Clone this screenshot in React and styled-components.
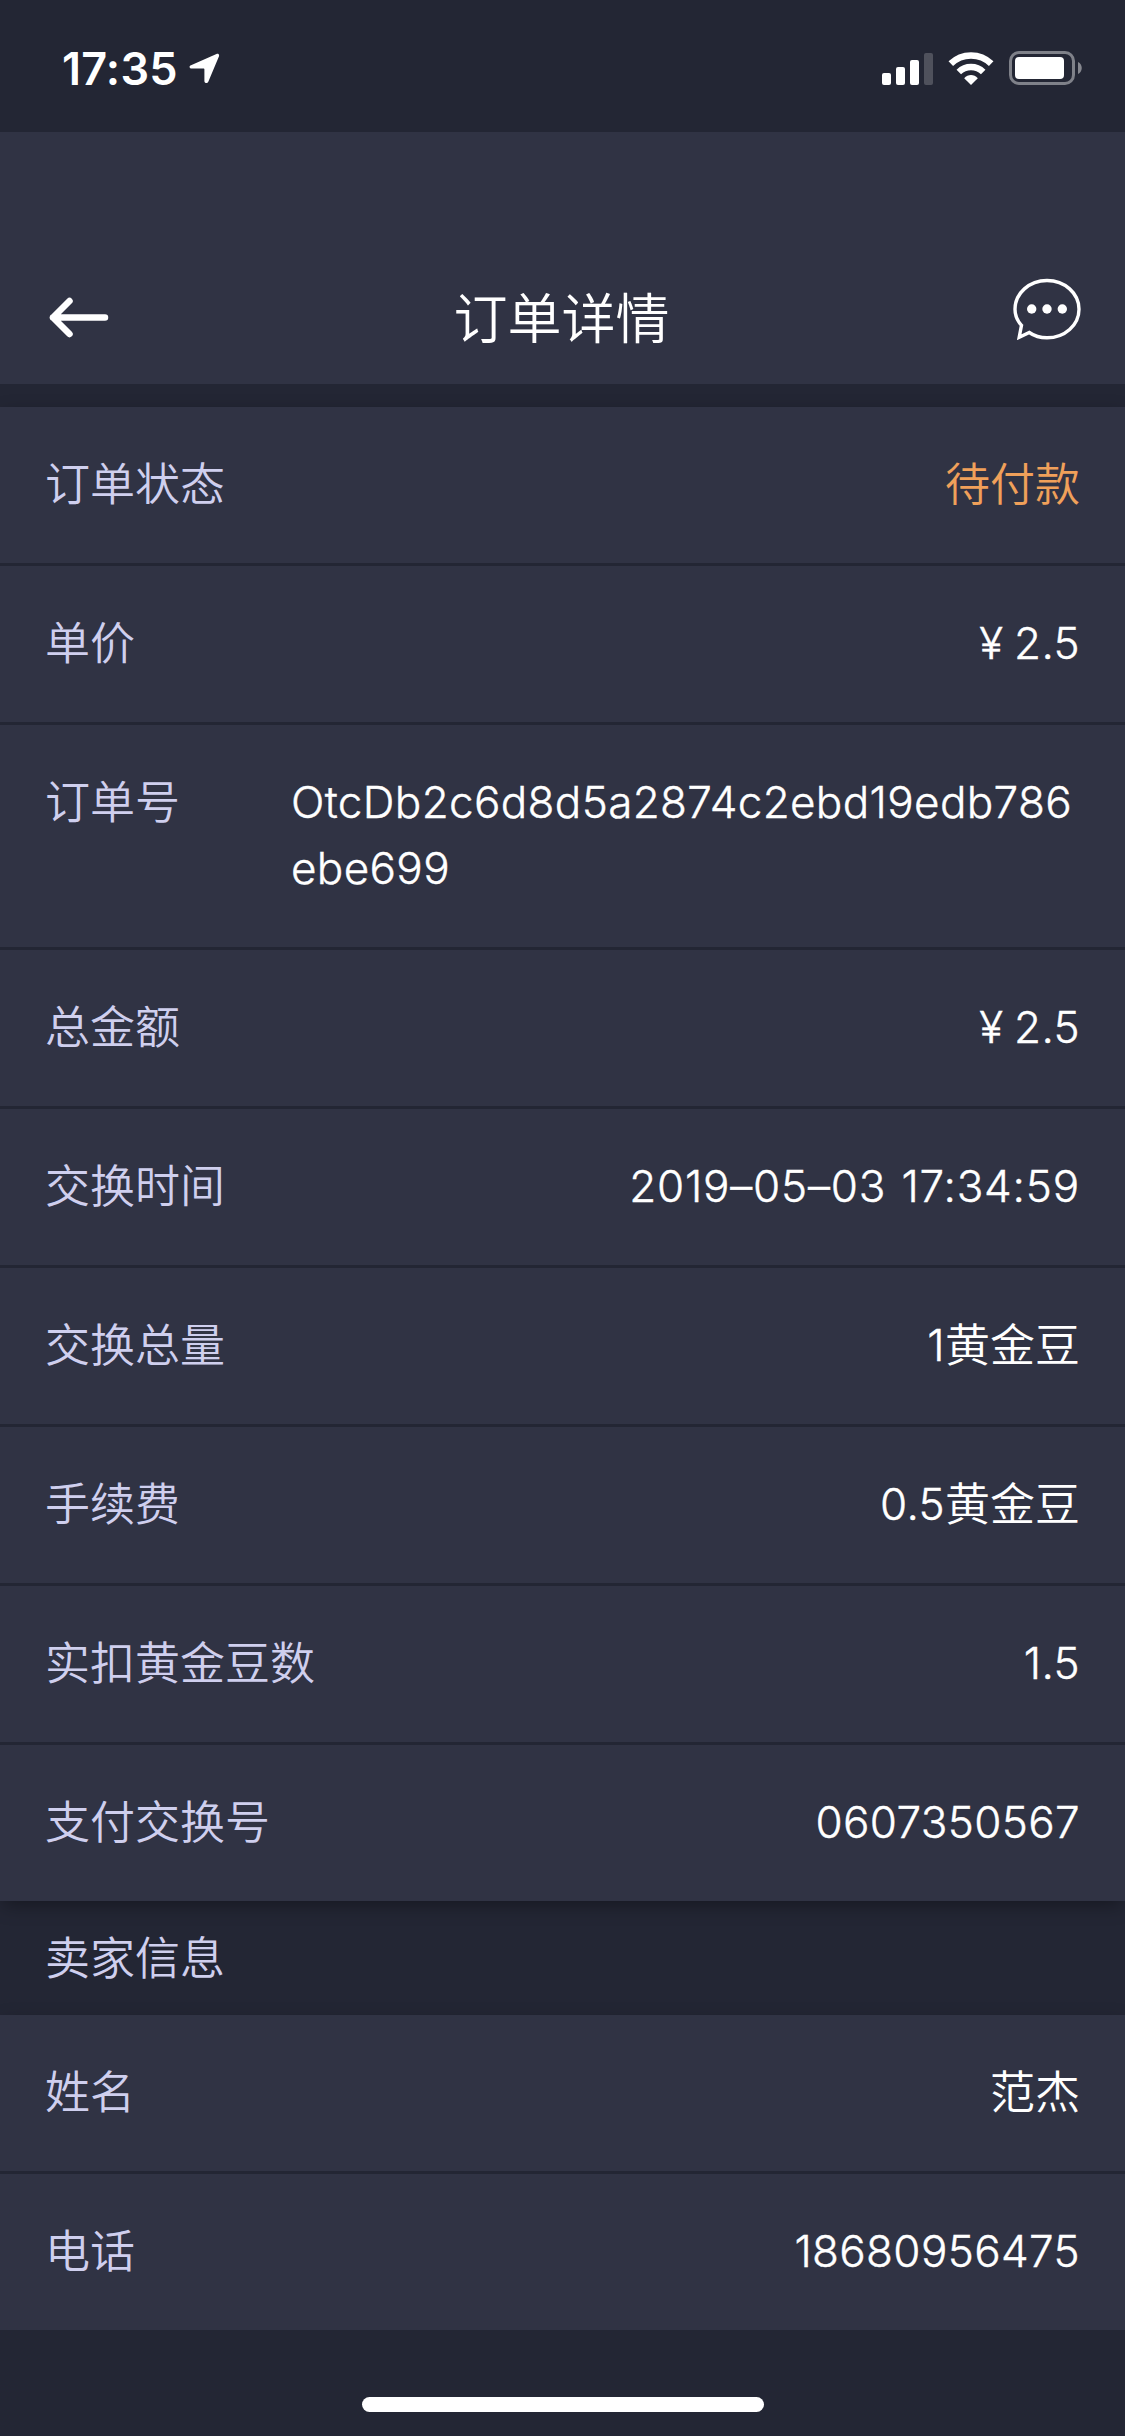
import React from "react";
import styled, { createGlobalStyle } from "styled-components";

const GlobalStyle = createGlobalStyle`
  body {
    margin: 0;
    background-color: #232634;
    font-family: Inter, "Noto Sans CJK SC", sans-serif;
    font-weight: 350;
    color: #fff;
  }
`;

const Screen = styled.div`
  display: flex;
  flex-direction: column;
  width: 1125px;
  height: 2436px;
  overflow: hidden;
  background-color: #232634;
`;

const StatusBar = styled.div`
  display: flex;
  justify-content: space-between;
  box-sizing: border-box;
  height: 132px;
  padding: 42px 42px 0 62px;
`;

const Clock = styled.div`
  display: flex;
  gap: 11px;
  font-size: 45px;
  font-weight: 600;
  line-height: 54px;
  letter-spacing: 0.2px;

  svg {
    margin-top: 11px;
  }
`;

const StatusIcons = styled.div`
  display: flex;
  gap: 15px;
  padding-top: 9px;
`;

const Header = styled.header`
  display: flex;
  align-items: center;
  justify-content: space-between;
  box-sizing: border-box;
  height: 252px;
  padding: 118px 44px 0 48px;
  background-color: #303344;
`;

const Title = styled.h1`
  margin: 0;
  padding: 5px 6px 0 0;
  font-size: 54px;
  font-weight: 350;
  line-height: 72px;
`;

const IconButton = styled.button`
  display: flex;
  width: 68px;
  padding: ${({ $lift }) => ($lift ? "0 0 17px" : "0")};
  border: 0;
  background: none;
`;

const Card = styled.section`
  margin-top: ${({ $spaced }) => ($spaced ? "23px" : "0")};
  background-color: #303344;
  box-shadow: 0 6px 18px -3px rgba(0, 0, 0, 0.4);
  clip-path: ${({ $flatBottom }) => ($flatBottom ? "inset(-30px 0 0 0)" : "none")};
`;

const Row = styled.div`
  display: flex;
  justify-content: space-between;
  padding: 45px;
  font-size: 45px;
  line-height: 66px;

  & + & {
    border-top: 3px solid #232634;
  }
`;

const Label = styled.span`
  color: #cfcfee;
`;

const Value = styled.span`
  color: ${({ $highlight }) => ($highlight ? "#f0a05a" : "#fff")};
  ${({ $wide }) => $wide && `
    width: 789px;
    word-break: break-all;
  `}
`;

const Latin = styled.span`
  font-size: 44px;
  font-weight: 300;
  line-height: 1;
  vertical-align: 1px;
  letter-spacing: ${({ $spacing }) => $spacing || "0.35px"};
  word-spacing: ${({ $gap }) => $gap || "0"};
  -webkit-text-stroke: 0.4px currentColor;
`;

const SectionTitle = styled.h2`
  margin: 0;
  padding: 25px 45px 23px;
  font-size: 45px;
  font-weight: 350;
  line-height: 66px;
  color: #cfcfee;
`;

const HomeIndicator = styled.div`
  width: 402px;
  height: 15px;
  margin: auto auto 24px 362px;
  border-radius: 8px;
  background-color: #fff;
`;

const LocationIcon = () => (
  <svg width="31" height="31" viewBox="0 0 31 31" fill="#fff">
    <path d="M2 12.200 27.500 1C29.300.300 30.600 1.600 29.900 3.400L19.300 28.800C18.400 30.800 15.400 30.400 15.400 28V16.600C15.400 16 15.100 15.600 14.400 15.600H2.600C.200 15.600-.200 13.100 2 12.200Z" />
  </svg>
);

const SignalIcon = () => (
  <svg width="51" height="34" viewBox="0 0 51 34" fill="#fff">
    <rect x="0" y="22" width="9" height="12" rx="2" />
    <rect x="14" y="16" width="9" height="18" rx="2" />
    <rect x="28" y="9" width="9" height="25" rx="2" />
    <rect x="42" y="2" width="9" height="32" rx="2" fillOpacity="0.2" />
  </svg>
);

const WifiIcon = () => (
  <svg width="46" height="34" viewBox="0 0 46 34" fill="none" stroke="#fff">
    <path d="M2.800 12.600A29 29 0 0 1 43.200 12.600" strokeWidth="6.500" />
    <path d="M10.800 21A17.500 17.500 0 0 1 35.200 21" strokeWidth="6.500" />
    <path d="M16.200 27.200C20 23 26 23 29.800 27.200L23 34Z" fill="#fff" stroke="none" />
  </svg>
);

const BatteryIcon = () => (
  <svg width="74" height="34" viewBox="0 0 74 34">
    <rect x="1.500" y="1.500" width="63" height="31" rx="8.500" fill="none" stroke="#fff" strokeOpacity="0.420" strokeWidth="3" />
    <rect x="6" y="6" width="49" height="22" rx="4" fill="#fff" />
    <path d="M69 11C74 13 74 21 69 23Z" fill="#fff" fillOpacity="0.450" />
  </svg>
);

const BackIcon = () => (
  <svg width="62" height="44" viewBox="0 0 62 44" fill="none" stroke="#fff" strokeWidth="6.500" strokeLinecap="round" strokeLinejoin="round">
    <path d="M21.500 6 5 22.500 21.500 39M5 22.500H57" />
  </svg>
);

const ChatIcon = () => (
  <svg width="68" height="62" viewBox="0 0 68 62" fill="#fff">
    <path
      d="M8.500 47.300C4 42.500 2 37 2 31.200 2 15.300 16.300 2.500 34 2.500S66 15.300 66 31.200 51.700 59.800 34 59.800C27.500 59.800 21.500 58.200 16.300 54.500L6.200 59.300Z"
      fill="none"
      stroke="#fff"
      strokeWidth="3.400"
    />
    <circle cx="18.700" cy="31" r="4.700" />
    <circle cx="34" cy="31" r="4.700" />
    <circle cx="49.300" cy="31" r="4.700" />
  </svg>
);

const orderRows = [
  { label: "订单状态", text: "待付款", highlight: true },
  { label: "单价", latin: "¥ 2.5", gap: "-2px" },
  { label: "订单号", latin: "OtcDb2c6d8d5a2874c2ebd19edb786ebe699", wide: true },
  { label: "总金额", latin: "¥ 2.5", gap: "-2px" },
  { label: "交换时间", latin: "2019–05–03 17:34:59", spacing: "0.8px", gap: "2px" },
  { label: "交换总量", latin: "1", text: "黄金豆" },
  { label: "手续费", latin: "0.5", text: "黄金豆" },
  { label: "实扣黄金豆数", latin: "1.5" },
  { label: "支付交换号", latin: "0607350567" },
];

const sellerRows = [
  { label: "姓名", text: "范杰" },
  { label: "电话", latin: "18680956475" },
];

const DetailRow = ({ label, latin, text, highlight, wide, spacing, gap }) => (
  <Row>
    <Label>{label}</Label>
    <Value $highlight={highlight} $wide={wide}>
      {latin && (
        <Latin $spacing={spacing} $gap={gap}>
          {latin}
        </Latin>
      )}
      {text}
    </Value>
  </Row>
);

const App = () => {
  return (
    <Screen>
      <GlobalStyle />
      <StatusBar>
        <Clock>
          17:35
          <LocationIcon />
        </Clock>
        <StatusIcons>
          <SignalIcon />
          <WifiIcon />
          <BatteryIcon />
        </StatusIcons>
      </StatusBar>
      <Header>
        <IconButton aria-label="返回">
          <BackIcon />
        </IconButton>
        <Title>订单详情</Title>
        <IconButton aria-label="消息" $lift>
          <ChatIcon />
        </IconButton>
      </Header>
      <Card $spaced>
        {orderRows.map((row) => (
          <DetailRow key={row.label} {...row} />
        ))}
      </Card>
      <SectionTitle>卖家信息</SectionTitle>
      <Card $flatBottom>
        {sellerRows.map((row) => (
          <DetailRow key={row.label} {...row} />
        ))}
      </Card>
      <HomeIndicator />
    </Screen>
  );
};

export default App;
